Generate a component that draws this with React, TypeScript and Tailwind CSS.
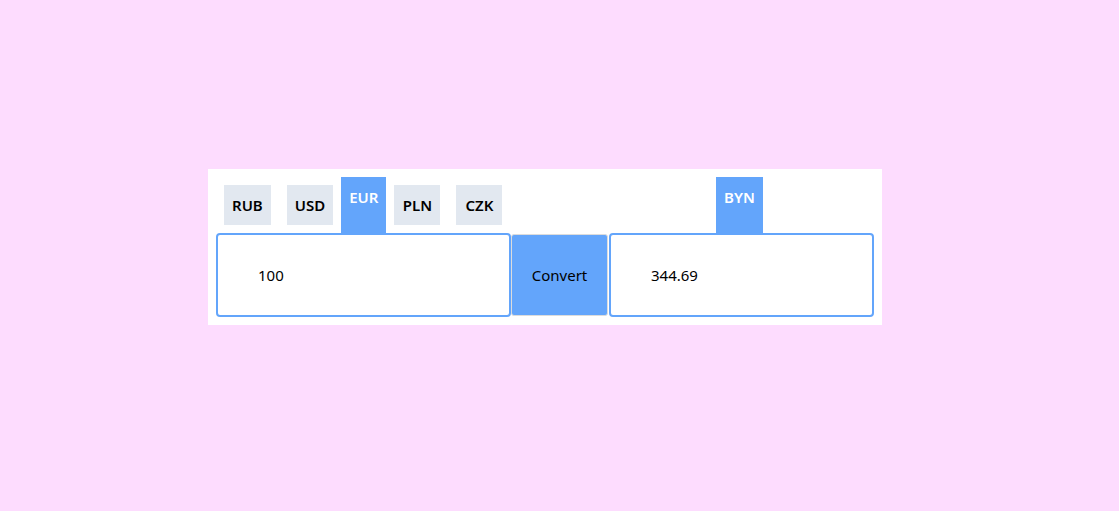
import React, { useState } from 'react';

const leftCurrencies = ['RUB', 'USD', 'EUR', 'PLN', 'CZK'];
const rightCurrencies = ['BYN'];

const Tab = ({ name, active, onClick }: { name: string; active: boolean; onClick: () => void }) => (
  <button
    type="button"
    onClick={onClick}
    className={
      active
        ? 'h-[56px] min-w-[45px] px-2 pt-[9px] bg-[#63a5fb] text-white font-semibold text-[15px] leading-[22px] self-start flex items-start justify-center'
        : 'h-[40px] min-w-[46px] m-2 px-2 bg-[#e2e8f0] text-black font-semibold text-[15px] leading-[22px] flex items-center justify-center'
    }
  >
    {name}
  </button>
);

const App: React.FC = () => {
  const [from, setFrom] = useState('EUR');
  const [to, setTo] = useState('BYN');
  const [amount, setAmount] = useState('100');

  return (
    <div
      className="min-h-[511px] w-full bg-[#fddcfe] flex items-start pl-[208px] pt-[169px]"
      style={{ fontFamily: '"Noto Sans", "Open Sans", sans-serif' }}
    >
      <div className="bg-white p-2 pr-[8px] flex items-end">
        <div className="flex flex-col w-[295px]">
          <div className="flex items-start h-[56px]">
            {leftCurrencies.map((c) => (
              <Tab key={c} name={c} active={from === c} onClick={() => setFrom(c)} />
            ))}
          </div>
          <input
            value={amount}
            onChange={(e) => setAmount(e.target.value)}
            className="h-[84px] w-full border-2 border-[#63a5fb] rounded-[4px] pl-[40px] text-[15px] text-black outline-none"
          />
        </div>
        <button
          type="button"
          className="h-[82px] w-[97px] mb-[1px] bg-[#63a5fb] border border-[#dcdcdc] rounded-[3px] text-[15px] text-black"
        >
          Convert
        </button>
        <div className="flex flex-col w-[265px] ml-[1px]">
          <div className="flex items-start justify-center h-[56px] pr-[4px]">
            {rightCurrencies.map((c) => (
              <Tab key={c} name={c} active={to === c} onClick={() => setTo(c)} />
            ))}
          </div>
          <div className="h-[84px] w-full border-2 border-[#63a5fb] rounded-[4px] pl-[40px] flex items-center text-[15px] text-black">
            344.69
          </div>
        </div>
      </div>
    </div>
  );
};

export default App;
